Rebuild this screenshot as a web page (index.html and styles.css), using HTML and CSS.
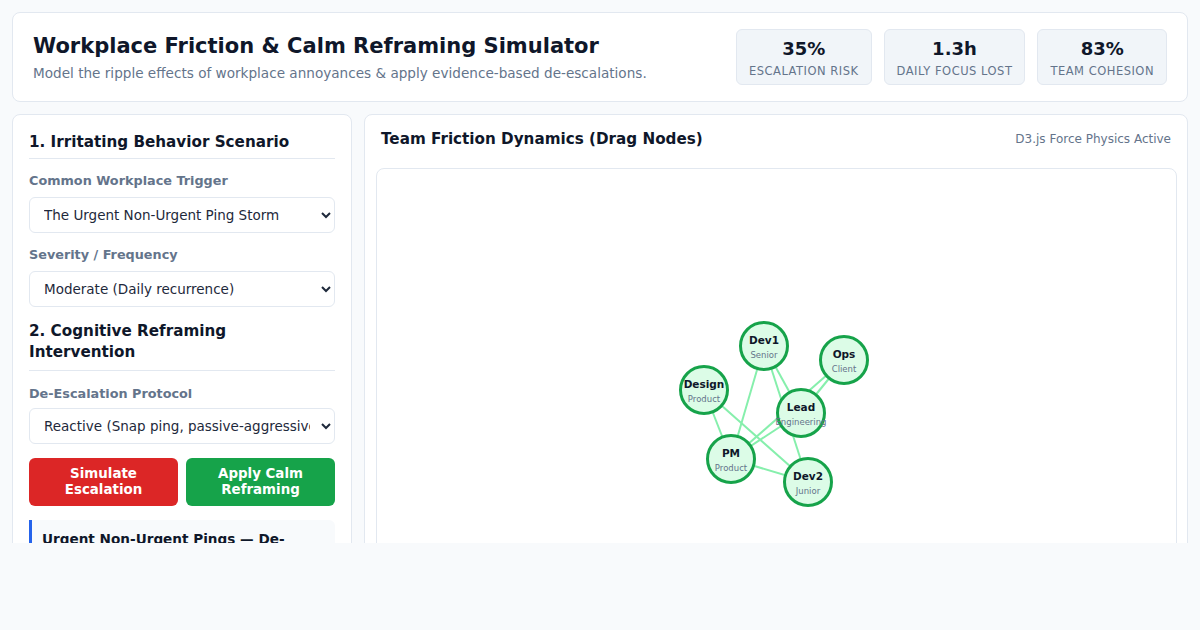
FILE: index.html
```html
<!DOCTYPE html>
<html lang="en">
<head>
<meta charset="utf-8">
<title>Workplace Friction &amp; Calm Reframing Simulator</title>
<link rel="stylesheet" href="styles.css">
</head>
<body>
<div class="app">
  <header class="topbar">
    <div class="intro">
      <h1>Workplace Friction &amp; Calm Reframing Simulator</h1>
      <p>Model the ripple effects of workplace annoyances &amp; apply evidence-based de-escalations.</p>
    </div>
    <div class="stats">
      <div class="stat"><div class="stat-value">35%</div><div class="stat-label">Escalation Risk</div></div>
      <div class="stat"><div class="stat-value">1.3h</div><div class="stat-label">Daily Focus Lost</div></div>
      <div class="stat"><div class="stat-value">83%</div><div class="stat-label">Team Cohesion</div></div>
    </div>
  </header>

  <main class="workspace">
    <aside class="panel controls">
      <h2 class="section-title">1. Irritating Behavior Scenario</h2>
      <label class="field-label" for="trigger">Common Workplace Trigger</label>
      <select id="trigger" class="field">
        <option>The Urgent Non-Urgent Ping Storm</option>
        <option>The Reply-All Avalanche</option>
        <option>The Meeting That Could Be an Email</option>
      </select>
      <label class="field-label" for="severity">Severity / Frequency</label>
      <select id="severity" class="field">
        <option>Moderate (Daily recurrence)</option>
        <option>Mild (Weekly recurrence)</option>
        <option>Severe (Hourly recurrence)</option>
      </select>

      <h2 class="section-title second">2. Cognitive Reframing Intervention</h2>
      <label class="field-label" for="protocol">De-Escalation Protocol</label>
      <select id="protocol" class="field">
        <option>Reactive (Snap ping, passive-aggressive reply)</option>
        <option>Calm (Batch replies, set availability)</option>
      </select>

      <div class="actions">
        <button class="btn btn-danger" type="button">Simulate Escalation</button>
        <button class="btn btn-success" type="button">Apply Calm Reframing</button>
      </div>

      <div class="note">
        <h3>Urgent Non-Urgent Pings — De-escalation Playbook</h3>
        <p>Batch notifications into focus windows and agree on what truly counts as urgent.</p>
      </div>
    </aside>

    <section class="panel graph-panel">
      <div class="graph-head">
        <h2>Team Friction Dynamics (Drag Nodes)</h2>
        <span class="graph-status">D3.js Force Physics Active</span>
      </div>
      <div class="graph-canvas">
        <svg class="graph" viewBox="0 0 799 480" width="799" height="480">
          <g class="links">
            <line x1="387" y1="177" x2="354" y2="290"/>
            <line x1="387" y1="177" x2="424" y2="244"/>
            <line x1="387" y1="177" x2="431" y2="313"/>
            <line x1="467" y1="191" x2="424" y2="244"/>
            <line x1="467" y1="191" x2="354" y2="290"/>
            <line x1="424" y1="244" x2="354" y2="290"/>
            <line x1="327" y1="221" x2="354" y2="290"/>
            <line x1="327" y1="221" x2="431" y2="313"/>
            <line x1="354" y1="290" x2="431" y2="313"/>
          </g>
          <g class="nodes">
            <g transform="translate(387 177)"><circle r="23.5"/><text class="n-name" y="-2">Dev1</text><text class="n-role" y="12">Senior</text></g>
            <g transform="translate(467 191)"><circle r="23.5"/><text class="n-name" y="-2">Ops</text><text class="n-role" y="12">Client</text></g>
            <g transform="translate(327 221)"><circle r="23.5"/><text class="n-name" y="-2">Design</text><text class="n-role" y="12">Product</text></g>
            <g transform="translate(424 244)"><circle r="23.5"/><text class="n-name" y="-2">Lead</text><text class="n-role" y="12">Engineering</text></g>
            <g transform="translate(354 290)"><circle r="23.5"/><text class="n-name" y="-2">PM</text><text class="n-role" y="12">Product</text></g>
            <g transform="translate(431 313)"><circle r="23.5"/><text class="n-name" y="-2">Dev2</text><text class="n-role" y="12">Junior</text></g>
          </g>
        </svg>
      </div>
    </section>
  </main>
</div>
</body>
</html>
```

FILE: styles.css
```css
* {
  box-sizing: border-box;
}

html, body {
  margin: 0;
  background: #f8fafc;
}

body {
  font-family: "DejaVu Sans", "Noto Sans", sans-serif;
  color: #0f172a;
}

.app {
  height: 543px;
  overflow: hidden;
  padding: 12px;
  display: flex;
  flex-direction: column;
  gap: 12px;
}

/* Header */
.topbar {
  flex: none;
  display: flex;
  align-items: center;
  justify-content: space-between;
  background: #fff;
  border: 1px solid #e2e8f0;
  border-radius: 8px;
  padding: 16px 20px;
}

.intro h1 {
  margin: 0;
  font-size: 21px;
  line-height: 28px;
  font-weight: 700;
  color: #0f172a;
}

.intro p {
  margin: 4px 0 0;
  font-size: 13.6px;
  line-height: 18px;
  color: #64748b;
}

.stats {
  display: flex;
  gap: 12px;
}

.stat {
  background: #f1f5f9;
  border: 1px solid #e2e8f0;
  border-radius: 6px;
  padding: 7px 12px;
  height: 56px;
  text-align: center;
}

.stat-value {
  font-size: 18px;
  line-height: 24px;
  font-weight: 700;
  color: #0f172a;
}

.stat-label {
  margin-top: 2px;
  font-size: 11.5px;
  line-height: 16px;
  letter-spacing: 0.5px;
  text-transform: uppercase;
  color: #64748b;
}

/* Main area */
.workspace {
  flex: 1;
  display: grid;
  grid-template-columns: 340px 1fr;
  gap: 12px;
  min-height: 0;
}

.panel {
  background: #fff;
  border: 1px solid #e2e8f0;
  border-radius: 8px;
}

.controls {
  padding: 16px;
  display: flex;
  flex-direction: column;
}

.section-title {
  margin: 0;
  font-size: 15.2px;
  line-height: 21px;
  font-weight: 700;
  color: #0f172a;
  padding-top: 1px;
  padding-bottom: 5px;
  border-bottom: 1px solid #e2e8f0;
}

.section-title.second {
  margin-top: 13px;
  padding-bottom: 7px;
}

.field-label {
  margin-top: 14px;
  margin-bottom: 8px;
  font-size: 12.8px;
  line-height: 16px;
  font-weight: 700;
  color: #64748b;
}

.section-title.second + .field-label {
  margin-top: 15px;
  margin-bottom: 6px;
}

.field {
  height: 36px;
  width: 100%;
  padding: 0 8px 0 10px;
  font-family: inherit;
  font-size: 13.5px;
  color: #1e293b;
  background: #fff;
  border: 1px solid #e2e8f0;
  border-radius: 6px;
}

.actions {
  margin-top: 14px;
  display: grid;
  grid-template-columns: 1fr 1fr;
  gap: 8px;
}

.btn {
  height: 48px;
  padding: 0 8px;
  border: none;
  border-radius: 6px;
  font-family: inherit;
  font-size: 13.4px;
  line-height: 16px;
  font-weight: 700;
  color: #fff;
}

.btn-danger {
  background: #dc2626;
}

.btn-success {
  background: #16a34a;
}

.note {
  margin-top: 14px;
  background: #f8fafc;
  border-left: 3px solid #2563eb;
  border-radius: 0 6px 6px 0;
  padding: 10px 10px;
}

.note h3 {
  margin: 0;
  font-size: 13.6px;
  line-height: 18px;
  font-weight: 700;
  color: #0f172a;
}

.note p {
  margin: 6px 0 0;
  font-size: 13px;
  color: #475569;
}

/* Graph panel */
.graph-panel {
  display: flex;
  flex-direction: column;
  min-width: 0;
}

.graph-head {
  display: flex;
  align-items: center;
  justify-content: space-between;
  padding: 14px 16px;
  margin-bottom: 5px;
}

.graph-head h2 {
  margin: 0;
  font-size: 15.2px;
  line-height: 20px;
  font-weight: 700;
  color: #0f172a;
}

.graph-status {
  font-size: 12px;
  color: #64748b;
}

.graph-canvas {
  margin: 0 10px 0 11px;
  border: 1px solid #e2e8f0;
  border-radius: 8px;
  background: #fff;
  height: 482px;
  flex: none;
  overflow: hidden;
}

.graph {
  display: block;
}

.links line {
  stroke: #86efac;
  stroke-width: 2;
}

.nodes circle {
  fill: #dcfce7;
  stroke: #16a34a;
  stroke-width: 3;
}

.nodes text {
  text-anchor: middle;
  font-family: "DejaVu Sans", sans-serif;
}

.n-name {
  font-size: 10.5px;
  font-weight: 700;
  fill: #0f172a;
}

.n-role {
  font-size: 8.5px;
  fill: #64748b;
}
```
